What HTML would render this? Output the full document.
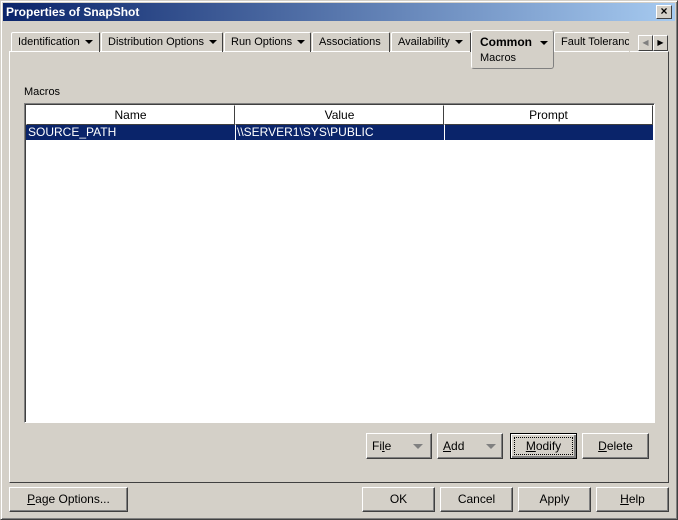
<html><head><style>
body{margin:0;width:678px;height:520px;background:#d4d0c8;font-family:"Liberation Sans",sans-serif;font-size:11px;position:relative;overflow:hidden}
div{box-sizing:border-box}
.a{position:absolute}
.win{left:0;top:0;width:678px;height:520px;border:1px solid;border-color:#d4d0c8 #404040 #404040 #d4d0c8;box-shadow:inset 1px 1px #fff,inset -1px -1px #808080}
.title{left:3px;top:3px;width:672px;height:18px;background:linear-gradient(90deg,#0a246a,#a6caf0);color:#fff;font-weight:bold;font-size:12px;line-height:18px;padding-left:3px}
.x{left:656px;top:5px;width:16px;height:14px;background:#d4d0c8;border:1px solid;border-color:#fff #404040 #404040 #fff;font-size:12px;line-height:11px;text-align:center;font-weight:bold;color:#000}
.tab{top:32px;height:20px;border:1px solid;border-color:#fff #404040 transparent #fff;border-bottom:none;line-height:18px;padding-left:6px;white-space:nowrap;border-radius:2px 2px 0 0}
.tri{display:inline-block;width:0;height:0;border-left:4px solid transparent;border-right:4px solid transparent;border-top:4px solid #000;vertical-align:middle;margin-left:5px}
.panel{left:9px;top:51px;width:660px;height:432px;border:1px solid;border-color:#fff #404040 #404040 #fff}
.btn{height:26px;border:1px solid;border-color:#fff #404040 #404040 #fff;box-shadow:inset -1px -1px #808080;text-align:center;line-height:24px;font-size:12px}
.th{top:105px;height:20px;border:1px solid;border-color:#fff #404040 #404040 #fff;text-align:center;line-height:18px;font-size:12px}
u{text-decoration:underline}
</style></head><body>
<div class="a win"></div>
<div class="a title">Properties of SnapShot</div>
<div class="a x">×</div>
<div class="a panel"></div>
<div class="a tab" style="left:11px;width:89px">Identification<span class="tri"></span></div>
<div class="a tab" style="left:101px;width:122px">Distribution Options<span class="tri"></span></div>
<div class="a tab" style="left:224px;width:87px">Run Options<span class="tri"></span></div>
<div class="a tab" style="left:312px;width:78px">Associations</div>
<div class="a tab" style="left:391px;width:80px">Availability<span class="tri"></span></div>
<div class="a" style="left:471px;top:30px;width:83px;height:39px;border:1px solid;border-color:#fff #808080 #808080 #fff;border-radius:3px;background:#d4d0c8;padding-left:8px;line-height:22px"><b style="font-size:12px">Common</b><span class="tri" style="margin-left:8px"></span><div style="line-height:10px">Macros</div></div>
<div class="a tab" style="left:554px;width:76px;border-right-color:#d4d0c8;overflow:hidden">Fault Toleranc</div>
<div class="a" style="left:638px;top:35px;width:15px;height:16px;border:1px solid;border-color:#fff #404040 #404040 #fff;color:#808080;font-size:8px;text-align:center;line-height:14px">◀</div>
<div class="a" style="left:653px;top:35px;width:15px;height:16px;border:1px solid;border-color:#fff #404040 #404040 #fff;font-size:8px;text-align:center;line-height:14px">▶</div>
<div class="a" style="left:24px;top:86px">Macros</div>
<div class="a" style="left:24px;top:103px;width:631px;height:320px;background:#fff;border:1px solid;border-color:#808080 #fff #fff #808080;box-shadow:inset 1px 1px #404040"></div>
<div class="a th" style="left:26px;width:209px">Name</div>
<div class="a th" style="left:235px;width:209px">Value</div>
<div class="a th" style="left:444px;width:209px">Prompt</div>
<div class="a" style="left:26px;top:125px;width:627px;height:15px;background:#0a246a;color:#fff;font-size:12px;line-height:15px">
<span class="a" style="left:2px">SOURCE_PATH</span><span class="a" style="left:209px;top:0;width:1px;height:15px;background:#fff"></span><span class="a" style="left:211px">\\SERVER1\SYS\PUBLIC</span><span class="a" style="left:418px;top:0;width:1px;height:15px;background:#fff"></span></div>
<div class="a btn" style="left:366px;top:433px;width:66px;text-align:left;padding-left:5px">Fi<u>l</u>e<span class="tri" style="border-top-color:#808080;border-width:5px 5px 0;margin-left:22px"></span></div>
<div class="a btn" style="left:437px;top:433px;width:66px;text-align:left;padding-left:5px"><u>A</u>dd<span class="tri" style="border-top-color:#808080;border-width:5px 5px 0;margin-left:22px"></span></div>
<div class="a btn" style="left:510px;top:433px;width:67px;border:1px solid #000;box-shadow:inset 1px 1px #fff,inset -2px -2px #808080"><div style="margin:3px;border:1px dotted #000;line-height:16px"><u>M</u>odify</div></div>
<div class="a btn" style="left:582px;top:433px;width:67px"><u>D</u>elete</div>
<div class="a btn" style="left:9px;top:487px;width:119px;height:25px;line-height:23px"><u>P</u>age Options...</div>
<div class="a btn" style="left:362px;top:487px;width:73px;height:25px;line-height:23px">OK</div>
<div class="a btn" style="left:440px;top:487px;width:73px;height:25px;line-height:23px">Cancel</div>
<div class="a btn" style="left:518px;top:487px;width:73px;height:25px;line-height:23px">Apply</div>
<div class="a btn" style="left:596px;top:487px;width:73px;height:25px;line-height:23px"><u>H</u>elp</div>
</body></html>
